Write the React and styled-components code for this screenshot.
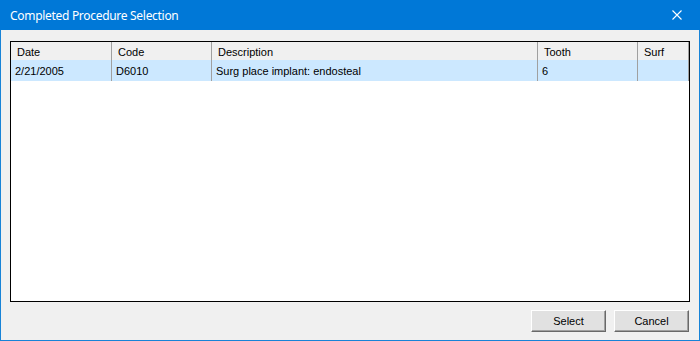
import React from 'react'
import styled, { createGlobalStyle } from 'styled-components'

const GlobalStyle = createGlobalStyle`
    html, body {
        margin: 0;
        padding: 0;
        background: #ffffff;
    }
`

const Window = styled.div`
    width: 700px;
    height: 341px;
    box-sizing: border-box;
    display: flex;
    flex-direction: column;
    border: 1px solid #1883d7;
    border-top: none;
    background: #f0f0f0;
    font-family: "Liberation Sans", Arial, sans-serif;
    font-size: 11px;
    color: #000;
`

const TitleBar = styled.div`
    height: 30px;
    margin: 0 -1px;
    background: #0078d7;
    display: flex;
    align-items: center;
    justify-content: space-between;
    padding: 0 0 0 10px;
    color: #ffffff;
    font-family: "Noto Sans", "Open Sans", sans-serif;
    font-size: 12px;
    letter-spacing: -0.3px;
`

const CloseButton = styled.div`
    width: 46px;
    height: 30px;
    display: flex;
    align-items: center;
    justify-content: center;
`

const Body = styled.div`
    flex: 1;
    display: flex;
    flex-direction: column;
    padding: 11px 9px 8px 9px;
`

const Grid = styled.div`
    height: 261px;
    box-sizing: border-box;
    border: 1px solid #000;
    background: #ffffff;
    display: flex;
    flex-direction: column;
`

const Row = styled.div`
    display: flex;
    height: ${p => p.header ? '18px' : '21px'};
    background: ${p => p.header ? '#f0f0f0' : p.selected ? '#cce8ff' : '#fff'};
    width: 678px;
`

const Cell = styled.div`
    width: ${p => p.w}px;
    box-sizing: border-box;
    border-right: 1px solid #a0a0a0;
    padding-left: ${p => p.header ? '6px' : '4px'};
    padding-top: 1px;
    display: flex;
    align-items: center;
    white-space: nowrap;
    overflow: hidden;
`

const Footer = styled.div`
    display: flex;
    justify-content: flex-end;
    gap: 8px;
    margin-top: 8px;
    padding-right: 1px;
`

const Button = styled.button`
    width: 75px;
    height: 22px;
    box-sizing: border-box;
    background: #e1e1e1;
    border: 1px solid;
    border-color: #ffffff #696969 #696969 #ffffff;
    box-shadow: inset -1px -1px 0 #a0a0a0;
    font-family: "Liberation Sans", Arial, sans-serif;
    font-size: 11px;
    color: #000;
    padding: 0;
`

const columns = [
    { key: 'date', title: 'Date', w: 101 },
    { key: 'code', title: 'Code', w: 100 },
    { key: 'desc', title: 'Description', w: 326 },
    { key: 'tooth', title: 'Tooth', w: 100 },
    { key: 'surf', title: 'Surf', w: 51 }
]

const procedures = [
    { id: 1, date: '2/21/2005', code: 'D6010', desc: 'Surg place implant: endosteal', tooth: '6', surf: '' }
]

export default function App() {
    return (
        <>
            <GlobalStyle />
            <Window>
                <TitleBar>
                    <span>Completed Procedure Selection</span>
                    <CloseButton>
                        <svg width="10" height="10" viewBox="0 0 10 10">
                            <path d="M0.5 0.5 L9.5 9.5 M9.5 0.5 L0.5 9.5" stroke="#fff" strokeWidth="1.1" />
                        </svg>
                    </CloseButton>
                </TitleBar>
                <Body>
                    <Grid>
                        <Row header>
                            {columns.map(c => <Cell header key={c.key} w={c.w}>{c.title}</Cell>)}
                        </Row>
                        {procedures.map(p => (
                            <Row key={p.id} selected>
                                {columns.map(c => <Cell key={c.key} w={c.w}>{p[c.key]}</Cell>)}
                            </Row>
                        ))}
                    </Grid>
                    <Footer>
                        <Button>Select</Button>
                        <Button>Cancel</Button>
                    </Footer>
                </Body>
            </Window>
        </>
    )
}
